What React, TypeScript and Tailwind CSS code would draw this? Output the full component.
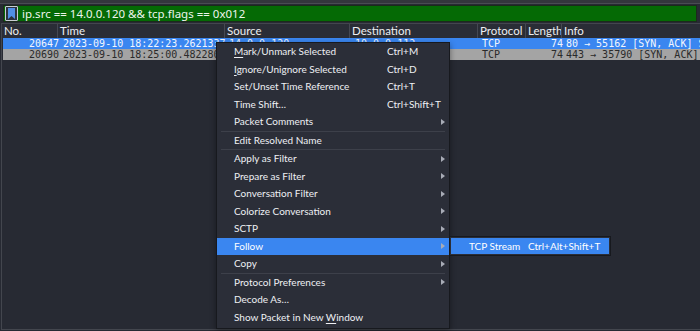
import React from 'react';

interface MenuItem {
  label: string;
  mnemonic?: number; // index of underlined char
  shortcut?: string;
  sub?: boolean;
  active?: boolean;
  sepAfter?: boolean;
}

const items: MenuItem[] = [
  { label: 'Mark/Unmark Selected', mnemonic: 0, shortcut: 'Ctrl+M' },
  { label: 'Ignore/Unignore Selected', mnemonic: 0, shortcut: 'Ctrl+D' },
  { label: 'Set/Unset Time Reference', shortcut: 'Ctrl+T' },
  { label: 'Time Shift…', shortcut: 'Ctrl+Shift+T' },
  { label: 'Packet Comments', sub: true, sepAfter: true },
  { label: 'Edit Resolved Name', sepAfter: true },
  { label: 'Apply as Filter', sub: true },
  { label: 'Prepare as Filter', sub: true },
  { label: 'Conversation Filter', sub: true },
  { label: 'Colorize Conversation', sub: true },
  { label: 'SCTP', sub: true },
  { label: 'Follow', sub: true, active: true },
  { label: 'Copy', sub: true, sepAfter: true },
  { label: 'Protocol Preferences', sub: true },
  { label: 'Decode As…' },
  { label: 'Show Packet in New Window', mnemonic: 19 },
];

const columns = ['No.', 'Time', 'Source', 'Destination', 'Protocol', 'Length', 'Info'];

const rows = [
  {
    no: '20647',
    time: '2023-09-10 18:22:23.2621337',
    src: '14.0.0.120',
    dst: '10.0.0.112',
    proto: 'TCP',
    len: '74',
    info: '80 → 55162 [SYN, ACK] Seq=0 Ack=1 Win=64240',
    cls: 'bg-[#3a86f0] text-[#f2f6ff]',
  },
  {
    no: '20690',
    time: '2023-09-10 18:25:00.4822801',
    src: '14.0.0.120',
    dst: '10.0.0.112',
    proto: 'TCP',
    len: '74',
    info: '443 → 35790 [SYN, ACK] Seq=0 Ack=1 Win=64240',
    cls: 'bg-[#a4a4a4] text-[#2a2a2a]',
  },
];

const grid = 'grid grid-cols-[56px_167px_125px_128px_48px_36px_1fr]';

const Label = ({ item }: { item: MenuItem }) => {
  if (item.mnemonic === undefined) return <>{item.label}</>;
  const i = item.mnemonic;
  return (
    <>
      {item.label.slice(0, i)}
      <span className="underline underline-offset-2">{item.label[i]}</span>
      {item.label.slice(i + 1)}
    </>
  );
};

const Arrow = () => (
  <svg width="4" height="6" viewBox="0 0 4 6" className="shrink-0">
    <path d="M0 0 L4 3 L0 6 Z" fill="#a8acb6" />
  </svg>
);

const App: React.FC = () => {
  return (
    <div className="relative w-[700px] h-[331px] overflow-hidden bg-[#272a33] font-['Lato',sans-serif] text-[11px]">
      {/* toolbar strip */}
      <div className="h-[4px] bg-[#34363d] border-b border-[#4a4c53]" />

      {/* display filter */}
      <div className="mx-[3px] mt-[1px] h-[17px] flex items-center bg-[#056a05] border border-[#1c2a1c]">
        <div className="w-[13px] h-[15px] ml-[1px] flex items-center justify-center border border-[#c8ccd4] rounded-[1px] bg-[#2c3340]">
          <svg width="7" height="11" viewBox="0 0 7 11">
            <path d="M0 0 H7 V11 L3.5 8 L0 11 Z" fill="#4f8fe6" />
          </svg>
        </div>
        <span className="ml-[4px] text-[#eef5ee] font-['Noto_Sans',sans-serif] text-[11.5px] leading-none">
          ip.src == 14.0.0.120 &amp;&amp; tcp.flags == 0x012
        </span>
      </div>

      {/* packet list */}
      <div className="mt-[1px] ml-[1px] h-[307px] border-l border-t border-b border-[#43464e]">
        <div className={`${grid} h-[14px] bg-[#2a2d36] text-[#eceef2] text-[11.5px] leading-[14px]`}>
          {columns.map((c, i) => (
            <div
              key={c}
              className={`pl-[2px] overflow-hidden whitespace-nowrap ${i < columns.length - 1 ? 'border-r border-[#454852]' : ''}`}
            >
              {c}
            </div>
          ))}
        </div>
        {rows.map((r) => (
          <div key={r.no} className={`${grid} ${r.cls} ml-[1px] h-[11px] leading-[11px] font-['DejaVu_Sans_Mono',monospace] text-[10px] whitespace-nowrap`}>
            <div className="text-right">{r.no}</div>
            <div className="pl-[4px] overflow-hidden">{r.time}</div>
            <div className="pl-[3px] overflow-hidden">{r.src}</div>
            <div className="pl-[4px] overflow-hidden">{r.dst}</div>
            <div className="pl-[3px]">{r.proto}</div>
            <div className="text-right">{r.len}</div>
            <div className="pl-[3px] overflow-hidden">{r.info}</div>
          </div>
        ))}
      </div>

      {/* context menu */}
      <div className="absolute left-[216px] top-[42px] w-[234px] pb-[2px] bg-[#2b2e38] border border-[#17191e] text-[#eef0f4] text-[10px] shadow-[0_2px_6px_rgba(0,0,0,0.4)]">
        {items.map((it) => (
          <React.Fragment key={it.label}>
            <div
              className={`h-[17.5px] flex items-center pl-[17px] pr-[4px] whitespace-nowrap ${
                it.active ? 'bg-[#3a86f0] text-white' : ''
              }`}
            >
              <span className="w-[153px] shrink-0">
                <Label item={it} />
              </span>
              <span className="flex-1">{it.shortcut}</span>
              {it.sub && <Arrow />}
            </div>
            {it.sepAfter && <div className="mx-[4px] h-px bg-[#3d404a]" />}
          </React.Fragment>
        ))}
      </div>

      {/* submenu */}
      <div className="absolute left-[449px] top-[236px] w-[162px] p-[1px] bg-[#2b2e38] border border-[#17191e] text-white text-[10px]">
        <div className="h-[16px] flex items-center bg-[#3a86f0] pl-[18px] whitespace-nowrap">
          <span className="w-[59px] shrink-0">TCP Stream</span>
          <span>Ctrl+Alt+Shift+T</span>
        </div>
      </div>
    </div>
  );
};

export default App;
